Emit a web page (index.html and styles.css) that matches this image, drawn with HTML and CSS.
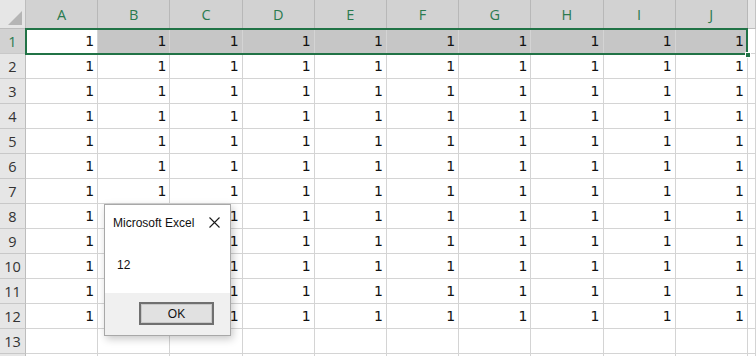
FILE: index.html
```html
<!DOCTYPE html>
<html lang="ja">
<head>
  <meta charset="UTF-8">
  <title>Book1 - Excel</title>
  <link rel="stylesheet" href="styles.css">
</head>
<body>
  <div class="sheet">
    <div class="grid">
      <div class="corner"><span class="tri"></span></div>
      <div class="ch sel">A</div><div class="ch sel">B</div><div class="ch sel">C</div><div class="ch sel">D</div><div class="ch sel">E</div>
      <div class="ch sel">F</div><div class="ch sel">G</div><div class="ch sel">H</div><div class="ch sel">I</div><div class="ch sel">J</div>
      <div class="ch"></div>
    </div>
    <div class="grid body-rows" id="rows"></div>

    <div class="selection"><span class="handle"></span></div>

    <div class="msgbox">
      <div class="msg-title">
        <span>Microsoft Excel</span>
        <svg class="close" width="11" height="11" viewBox="0 0 11 11">
          <path d="M0.5 0.5 L10.5 10.5 M10.5 0.5 L0.5 10.5" stroke="#1a1a1a" stroke-width="1.1" fill="none"/>
        </svg>
      </div>
      <div class="msg-text">12</div>
      <div class="msg-foot">
        <button class="ok">OK</button>
      </div>
    </div>
  </div>

  <script>
    const rows = document.getElementById('rows');
    let html = '';
    for (let r = 1; r <= 14; r++) {
      html += '<div class="rh' + (r == 1 ? ' sel' : '') + '">' + (r <= 13 ? r : '') + '</div>';
      for (let c = 0; c < 10; c++) {
        let cls = 'c';
        if (r == 1 && c > 0) cls += ' hl';
        // column B of rows 8-12 is hidden under the message box
        const hidden = c == 1 && r >= 8;
        html += '<div class="' + cls + '">' + (r <= 12 && !hidden ? '1' : '') + '</div>';
      }
      html += '<div class="c"></div>';
    }
    rows.innerHTML = html;
  </script>
</body>
</html>
```

FILE: styles.css
```css
* {
  box-sizing: border-box;
}

body {
  margin: 0;
  background-color: #ffffff;
  overflow: hidden;
}

.sheet {
  position: relative;
  width: 756px;
  height: 356px;
  overflow: hidden;
}

.grid {
  display: grid;
  grid-template-columns: 26px repeat(10, 72.2px) 1fr;
}

.body-rows {
  grid-auto-rows: 25px;
}

.corner {
  position: relative;
  height: 29px;
  background-color: #e6e6e6;
  border-right: 1px solid #bdbdbd;
  border-bottom: 1px solid #bdbdbd;

  .tri {
    position: absolute;
    right: 3px;
    bottom: 3px;
    width: 0;
    height: 0;
    border-left: 14px solid transparent;
    border-bottom: 14px solid #b5b5b5;
  }
}

.ch {
  height: 29px;
  display: flex;
  align-items: center;
  justify-content: center;
  font-family: "Open Sans", "Noto Sans", sans-serif;
  font-size: 14.5px;
  color: #444444;
  background-color: #e6e6e6;
  border-right: 1px solid #c3c3c3;
  border-bottom: 1px solid #bdbdbd;

  &.sel {
    background-color: #d2d2d2;
    color: #2a7a4f;
    border-right-color: #b8b8b8;
  }
}

.rh {
  display: flex;
  align-items: center;
  justify-content: center;
  font-family: "Open Sans", "Noto Sans", sans-serif;
  font-size: 14.5px;
  color: #333333;
  background-color: #e6e6e6;
  border-right: 1px solid #bdbdbd;
  border-bottom: 1px solid #c8c8c8;

  &.sel {
    background-color: #d2d2d2;
    color: #2a7a4f;
  }
}

.c {
  display: flex;
  align-items: center;
  justify-content: flex-end;
  padding-right: 3px;
  font-family: "DejaVu Sans", sans-serif;
  font-size: 14px;
  color: #111111;
  border-right: 1px solid #d4d4d4;
  border-bottom: 1px solid #d4d4d4;

  &.hl {
    background-color: #c6c6c6;
  }
}

.selection {
  position: absolute;
  left: 25px;
  top: 28px;
  width: 723px;
  height: 27px;
  border: 2px solid #217346;
  pointer-events: none;

  .handle {
    position: absolute;
    right: -5px;
    bottom: -5px;
    width: 6px;
    height: 6px;
    background-color: #217346;
    border: 1px solid #ffffff;
  }
}

.msgbox {
  position: absolute;
  left: 104px;
  top: 204px;
  width: 127px;
  height: 132px;
  display: flex;
  flex-direction: column;
  background-color: #ffffff;
  border: 1px solid #a8a8a8;
  box-shadow: 2px 3px 8px rgba(0, 0, 0, 0.22);
  font-family: "Liberation Sans", "Noto Sans", sans-serif;
  font-size: 12px;
  color: #111111;
}

.msg-title {
  display: flex;
  align-items: center;
  justify-content: space-between;
  height: 32px;
  padding: 3px 10px 0 8px;
}

.msg-text {
  flex: 1;
  padding: 21px 0 0 12px;
}

.msg-foot {
  height: 42px;
  display: flex;
  justify-content: flex-end;
  padding: 9px 16px 0 0;
  background-color: #f0f0f0;
}

.ok {
  width: 75px;
  height: 23px;
  font-family: "Liberation Sans", "Noto Sans", sans-serif;
  font-size: 12px;
  color: #111111;
  background-color: #e1e1e1;
  border: 2px solid #707070;
  box-shadow: inset 0 0 0 1px #c8c8c8;
  padding: 0;
}
```
